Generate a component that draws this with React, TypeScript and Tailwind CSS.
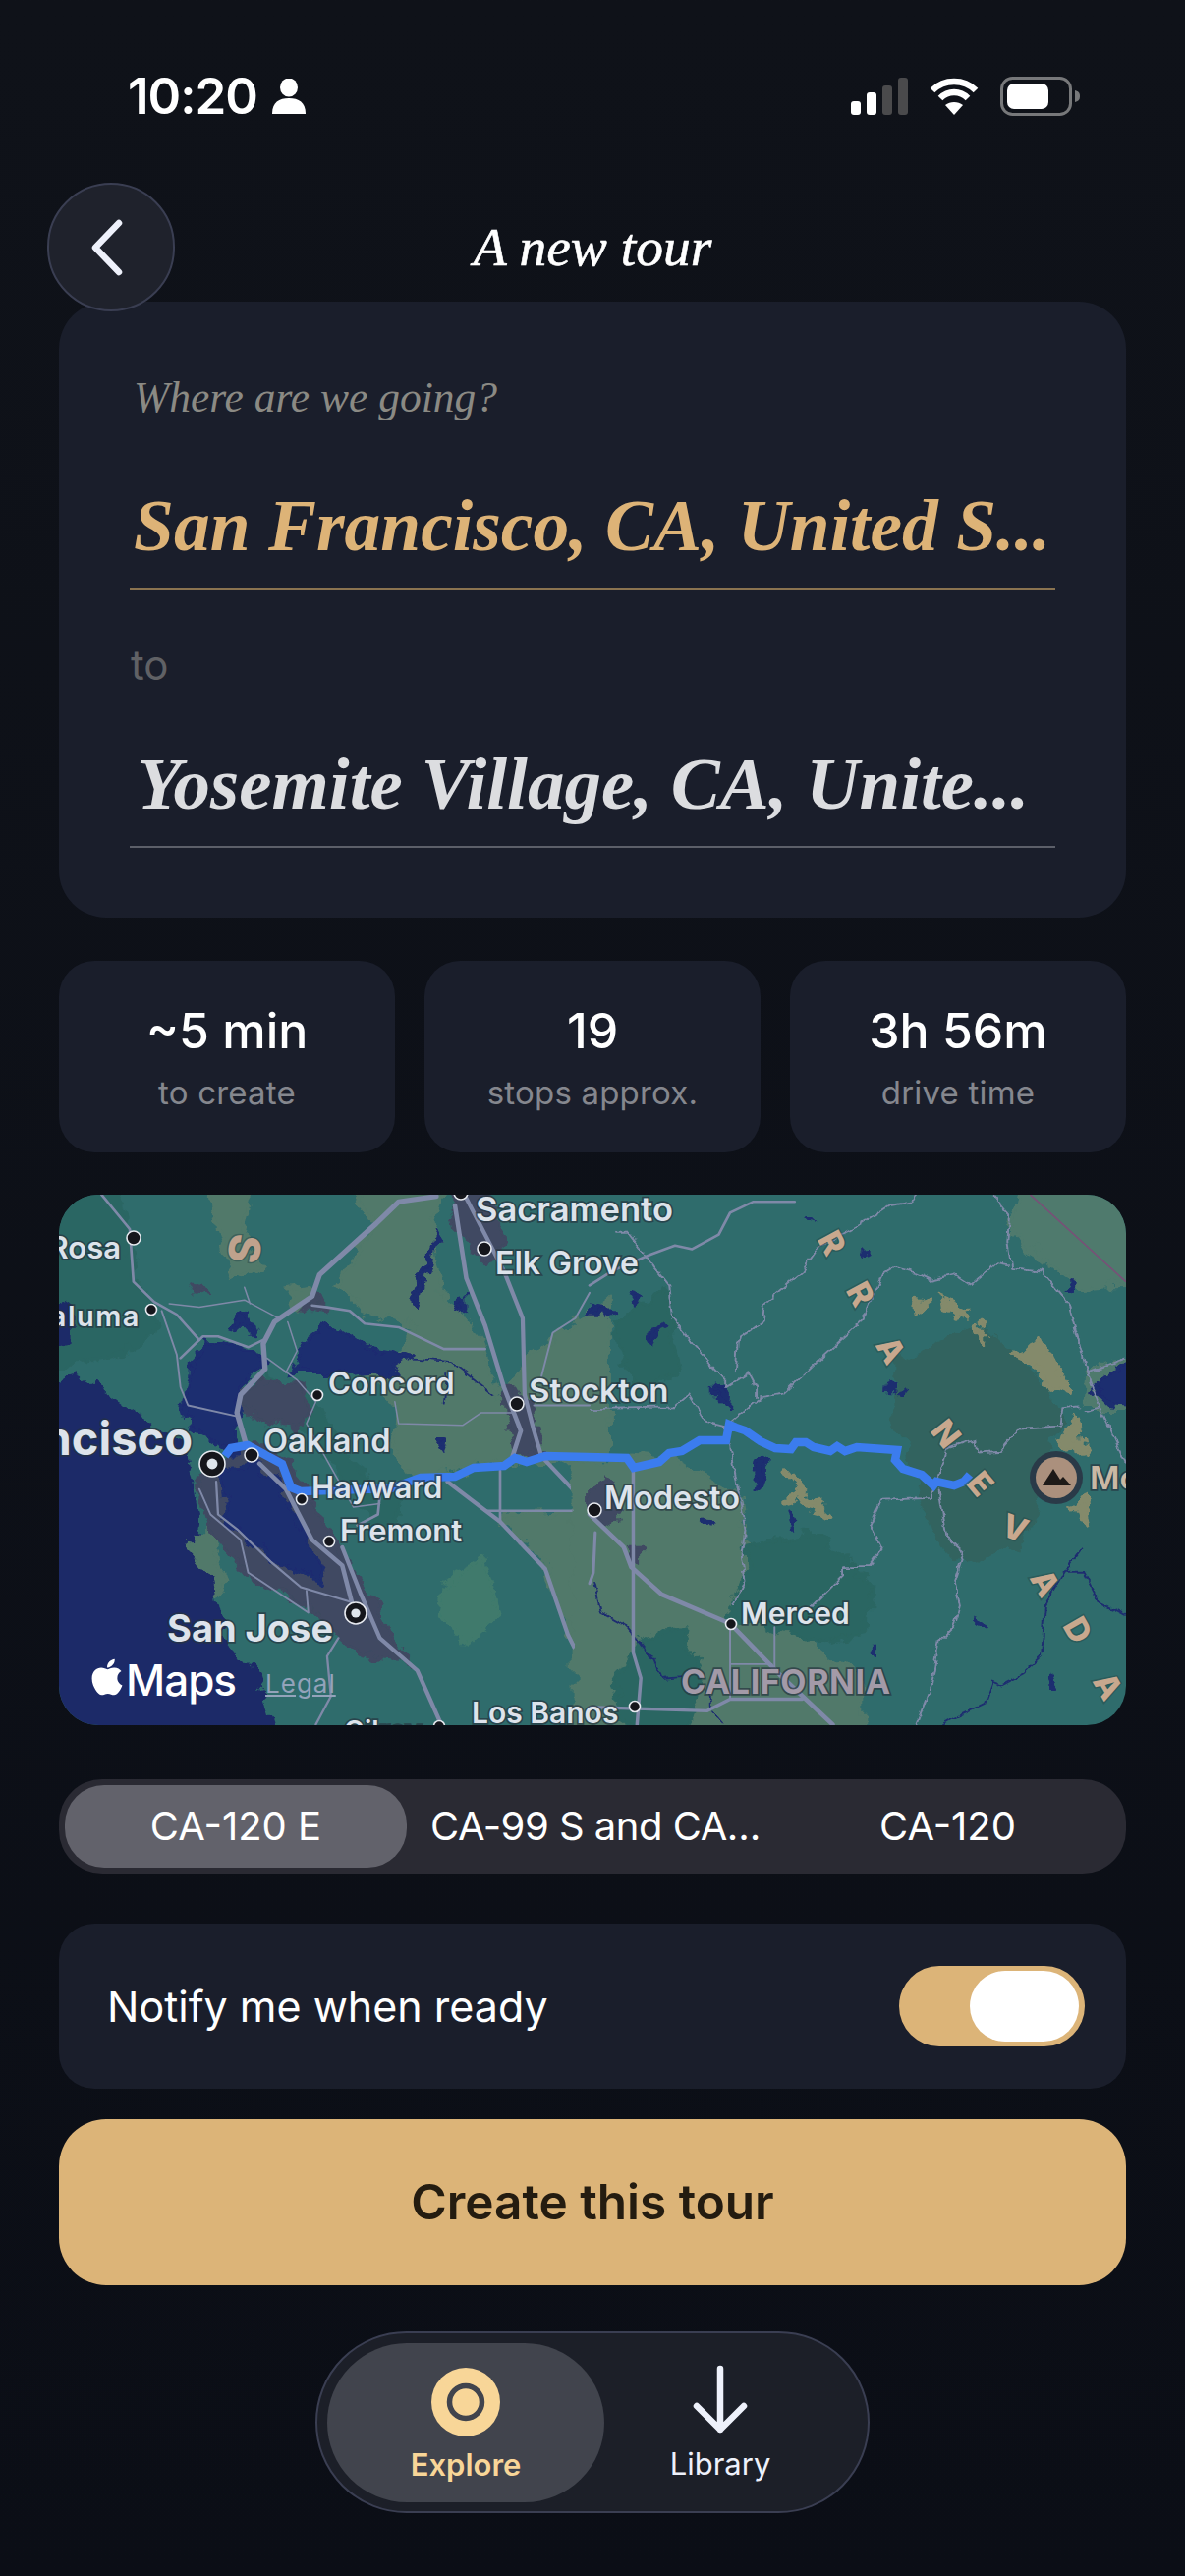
import { FaApple } from 'react-icons/fa';

const serif = "font-['Liberation_Serif',serif] italic";

function Blob({ d, fill }: { d: string; fill: string }) {
  return <path d={d} fill={fill} stroke={fill} strokeWidth={10} strokeLinejoin="round" />;
}

function Road({ d, w = 4 }: { d: string; w?: number }) {
  return <path d={d} fill="none" stroke="#7f89a8" strokeWidth={w} strokeLinejoin="round" strokeLinecap="round" />;
}

function Pin({ x, y, r = 7 }: { x: number; y: number; r?: number }) {
  return <circle cx={x} cy={y} r={r} fill="#15161c" stroke="#e6e9ef" strokeWidth={1.6} />;
}

function CityPin({ x, y, r }: { x: number; y: number; r: number }) {
  return (
    <g>
      <circle cx={x} cy={y} r={r} fill="#15161c" stroke="#e6e9ef" strokeWidth={1.6} />
      <circle cx={x} cy={y} r={r * 0.42} fill="#dfe5ec" />
    </g>
  );
}

function Label({ x, y, size, text, end, weight = 600, spacing = 0, color = '#dde3eb' }: { x: number; y: number; size: number; text: string; end?: boolean; weight?: number; spacing?: number; color?: string }) {
  return (
    <text
      x={x}
      y={y}
      fontSize={size}
      fontWeight={weight}
      letterSpacing={spacing}
      textAnchor={end ? 'end' : 'start'}
      fill={color}
      stroke="#26343f"
      strokeOpacity={0.7}
      strokeWidth={3.5}
      paintOrder="stroke"
      fontFamily="Inter, sans-serif"
    >
      {text}
    </text>
  );
}

const sierra: [string, number, number, number][] = [
  ['R', 847, 1277, 62],
  ['R', 876, 1329, 62],
  ['A', 907, 1386, 60],
  ['N', 963, 1471, 52],
  ['E', 998, 1522, 50],
  ['V', 1033, 1567, 20],
  ['A', 1064, 1623, 60],
  ['D', 1097, 1671, 60],
  ['A', 1128, 1728, 60],
];

function RouteMap() {
  return (
    <svg viewBox="60 1216 1086 540" className="block w-full h-full">
      <defs>
        {/* rough up the traced shapes so the coast and terrain look organic */}
        <filter id="organic" x="-10%" y="-10%" width="120%" height="120%">
          <feTurbulence type="fractalNoise" baseFrequency="0.018" numOctaves="4" seed="7" />
          <feDisplacementMap in="SourceGraphic" scale="60" xChannelSelector="R" yChannelSelector="G" />
        </filter>
        <filter id="wiggle" x="-10%" y="-10%" width="120%" height="120%">
          <feTurbulence type="fractalNoise" baseFrequency="0.03" numOctaves="3" seed="3" />
          <feDisplacementMap in="SourceGraphic" scale="22" xChannelSelector="R" yChannelSelector="G" />
        </filter>
      </defs>
      <rect x="60" y="1216" width="1086" height="540" fill="#2f6c6c" />

      {/* left half, traced from the bay area */}
      <g transform="translate(0 1190) scale(0.3827 0.37)">
        <g filter="url(#organic)">
          <Blob fill="#51796a" d="M900 20 L1180 20 L1150 200 L1170 330 L1280 470 L1340 640 L1400 520 L1620 350 L1620 800 L1320 810 L1200 830 L1100 850 L1040 760 L1060 650 L980 560 L1060 520 L1100 440 L960 390 L900 320 L1000 150 Z" />
          <Blob fill="#51796a" d="M760 330 L830 320 L810 380 L770 380 Z M510 1000 L560 1000 L600 1140 L570 1180 L510 1060 Z" />
          <Blob fill="#3f7a6c" d="M1180 1140 L1290 1060 L1330 1230 L1240 1310 L1170 1220 Z" />
          <Blob fill="#51796a" d="M1340 950 L1620 940 L1620 1420 L1510 1280 L1450 1100 Z" />
          <Blob fill="#51796a" d="M560 20 L680 20 L640 200 L700 270 L620 300 L580 170 Z" />
          <Blob fill="#2c6663" d="M100 20 L300 20 L340 170 L350 300 L420 380 L400 460 L300 520 L100 560 Z M700 560 L840 640 L1000 900 L1100 880 L1020 1000 L880 800 Z" />
          <Blob fill="#1c2a68" d="M90 610 L200 575 L290 620 L370 680 L490 770 L505 850 L520 950 L500 1050 L560 1130 L590 1280 L680 1400 L740 1600 L90 1600 Z" />
          <Blob fill="#1c2a68" d="M100 340 L190 400 L190 480 L100 500 Z" />
          <Blob fill="#3f4a62" d="M650 760 L720 760 L800 850 L900 1040 L1000 1200 L1040 1290 L1100 1370 L960 1330 L820 1210 L650 1110 L560 1000 L520 860 Z" />
          <Blob fill="#3f4a62" d="M630 630 L690 580 L780 590 L830 670 L800 720 L700 700 Z" />
          <Blob fill="#3f4a62" d="M1190 40 L1290 40 L1340 200 L1300 260 L1220 180 Z M1340 600 L1420 640 L1440 780 L1370 790 Z M520 300 L560 350 L510 340 Z M840 340 L870 390 L800 380 Z" />
          <Blob fill="#1f2d70" d="M510 530 L560 470 L660 490 L695 530 L640 610 L630 680 L640 780 L600 780 L510 720 L490 650 Z" />
          <Blob fill="#1f2d70" d="M590 830 L680 810 L750 870 L800 1000 L870 1130 L770 1100 L700 1060 L600 960 Z" />
          <Blob fill="#1f2d70" d="M780 560 L830 460 L870 430 L960 490 L1060 510 L1100 520 L1040 560 L950 570 L860 560 Z" />
          <Blob fill="#1f2d70" d="M1095 350 L1160 170 L1115 380 Z M1210 380 L1240 350 L1240 390 Z M1160 740 L1190 740 L1180 770 Z M610 440 L660 400 L680 450 Z" />
        </g>
        <path d="M1090 520 L1200 530 L1310 620 M1190 560 L1180 650" fill="none" stroke="#1f2d70" strokeWidth={5} filter="url(#wiggle)" />

        <Road w={7} d="M270 70 L345 165 L355 310 L410 365 L470 400 L530 470" />
        <Road w={14} d="M1160 75 L1060 90 L1000 150 L850 290 L830 350 L730 420 L700 480 L705 550 L640 620 L630 670 L655 760" />
        <Road w={7} d="M830 375 L870 380 L930 390 L970 425 L1060 435 L1180 495 L1290 495" />
        <Road w={12} d="M1210 100 L1240 300 L1290 430 L1340 600 L1385 720 L1360 800" />
        <Road w={11} d="M1240 80 L1340 280 L1390 410 L1395 620 L1420 720 L1440 790 L1568 930" />
        <Road w={12} d="M690 810 L760 880 L830 1020 L910 1090 L935 1190" />
        <Road w={11} d="M910 1040 L960 1170 L1010 1290 L1110 1380 L1170 1520" />
        <Road w={11} d="M1190 860 L1330 970 L1450 1100 L1510 1280 L1568 1400" />
        <Road w={7} d="M1330 830 L1330 970 M1290 940 L1568 940" />
        <Road w={6} d="M900 1290 L870 1340 L880 1450 L840 1528" />
        <Road w={5} d="M530 880 L560 950 L640 1020 L660 1110 L820 1220 L815 1160" />
        <Road w={6} d="M575 860 L580 950 L630 990 L720 1080 L800 1150 L930 1190" />
        <Road w={7} d="M480 520 L540 460 L580 460 L660 490 L700 470" />
        <Road w={5} d="M430 390 L470 510 L480 600 L500 650 L630 680" />
        <Road w={4} d="M450 370 L530 380 L650 360 L740 410 M650 325 L665 370 M765 420 L790 500 L760 560" />
        <Road w={4} d="M710 520 L790 580 L840 640 L815 700 L880 820 L940 930 L1010 920" />
        <Road w={4} d="M1050 640 L1060 700 L1230 705 L1280 670 L1370 670" />
        <Road w={5} d="M1440 570 L1470 450 L1530 410 L1568 340 M1568 650 L1420 650" />
        <Road w={7} d="M1010 900 L1005 950 L950 980" />
      </g>

      {/* right half, valley and sierra */}
      <g transform="translate(600 1190) scale(0.3866 0.37)">
        <g filter="url(#organic)">
          <Blob fill="#51796a" d="M-40 800 L110 790 L230 800 L400 900 L420 1100 L370 1220 L580 1300 L720 1420 L720 1600 L-40 1600 Z" />
          <Blob fill="#2b6662" d="M400 1050 L590 1000 L740 1130 L730 1270 L580 1300 L370 1220 L420 1100 Z M120 1600 L60 1420 L130 1300 L240 1260 L300 1400 L240 1600 Z M60 420 L200 340 L240 560 L120 620 Z" />
          <Blob fill="#31645f" d="M800 530 L1000 440 L1070 460 L1200 600 L1240 690 L1200 800 L1180 950 L1130 1030 L1020 1075 L950 1070 L880 920 L840 760 L800 680 Z" />
          <Blob fill="#4f7a6d" d="M1140 20 L1480 20 L1480 320 L1300 330 L1200 250 L1110 180 Z M1310 660 L1480 660 L1480 520 L1320 550 Z" />
          <g opacity={0.9}>
            <Blob fill="#8d8d6c" d="M1110 510 L1190 470 L1220 530 L1265 590 L1265 625 L1210 600 L1170 540 Z M920 350 L995 385 L985 405 L925 380 Z M1015 425 L1045 460 L1030 475 Z M1265 675 L1280 685 L1305 795 L1245 745 Z M1270 920 L1310 910 L1320 970 L1300 965 Z M510 825 L575 900 L640 960 L590 945 Z M510 908 L555 895 L540 920 Z M855 372 L885 378 L860 400 Z" />
          </g>
          <Blob fill="#3f4a62" d="M0 880 L50 850 L85 955 L40 985 L0 960 Z M105 1045 L135 1045 L135 1085 L115 1085 Z" />
          <Blob fill="#1f2d70" d="M325 585 L370 625 L368 655 L325 610 Z M435 800 L470 815 L450 875 L425 875 Z M0 380 L60 392 L40 400 L0 400 Z M150 455 L195 425 L165 485 Z M110 340 L135 348 L130 375 Z M1325 600 L1380 555 L1480 545 L1480 655 L1370 648 Z M1248 340 L1275 305 L1268 345 Z M783 595 L792 620 L780 620 Z M808 622 L832 612 L825 625 Z M575 135 L600 135 L598 137 Z M722 225 L742 224 L722 230 Z M300 958 L330 975 L322 985 Z M1022 1232 L1042 1248 L1022 1243 Z M733 1310 L742 1310 L735 1330 Z M1208 1422 L1220 1395 L1228 1422 Z M518 935 L536 978 L527 982 Z" />
        </g>
        <path d="M1295 1045 L1250 1110 L1200 1200 L1190 1340 L1140 1390 L1085 1420 L1060 1410 L1040 1470 L960 1510 L930 1528 M1250 1110 L1300 1110 L1340 1190 L1412 1230 M10 1130 L30 1220 L100 1260 L170 1350 L190 1400 L240 1395 M320 1440 L320 1490 L350 1528" fill="none" stroke="#1f2d70" strokeWidth={5} filter="url(#wiggle)" />
        <path d="M1160 70 L1412 310" fill="none" stroke="#7a4f78" strokeWidth={4} />

        <Road w={7} d="M540 90 L430 90 L370 120 L340 180 L270 220 L225 210 L160 235 L60 280 L0 320" />
        <g filter="url(#wiggle)">
          <Road w={5} d="M860 70 L850 90 L790 100 L700 160 L600 220 L560 280 L460 370 L455 420 L390 470 L385 560" />
          <Road w={5} d="M1065 70 L1105 120 L1100 200 L1110 270 L1190 280 L1260 370 L1290 480 L1310 560 L1350 670 L1412 810" />
          <Road w={5} d="M1100 265 L1070 260 L1005 320 L960 290 L900 305 L860 285 L800 270 L770 290 L715 420 L620 510 L510 620 L450 630 L370 700" />
          <Road w={5} d="M70 175 L100 175 L210 320 L220 410 L270 480 L360 580 L360 600 L420 560 L440 600 L440 630" />
          <Road w={5} d="M0 660 L220 655 L260 620 L305 695 L360 710" />
          <Road w={5} d="M370 760 L410 990 L400 1060 L410 1130 L380 1200" />
          <Road w={5} d="M770 910 L900 905 L940 770 L1015 745 L1020 780 L1080 775 L1130 715 L1240 710 L1245 660 L1290 655" />
          <Road w={5} d="M920 885 L940 1010 L985 1050 L960 1130 L975 1200 L960 1260 L920 1300 L900 1420 L860 1528" />
          <Road w={5} d="M770 910 L740 980 L770 1045 L735 1095 L665 1095 L665 1120 L580 1210" />
          <Road w={5} d="M1310 560 L1412 520 M1305 665 L1345 655" />
        </g>
        <Road w={12} d="M0 950 L90 1040 L110 1095 L190 1170 L370 1250 L500 1390 L640 1528" />
        <Road w={9} d="M115 830 L115 1330 L135 1400 L125 1528" />
        <Road w={9} d="M0 1480 L310 1490 L370 1458 L560 1458" />
        <Road w={5} d="M370 1250 L370 1458 M370 1362 L480 1362 M487 1260 L487 1370" />
        <Road w={8} d="M15 1000 L10 1110 L0 1140" />
      </g>

      <path
        d="M229 1482 L235 1474 L252 1471 L287 1490 L296 1514 L306 1518 L398 1515 L428 1504 L463 1503 L482 1494 L513 1492 L524 1484 L536 1488 L555 1482 L638 1484 L645 1494 L671 1488 L681 1479 L694 1477 L712 1466 L739 1466 L742 1450 L749 1453 L758 1456 L774 1467 L789 1474 L805 1475 L810 1468 L820 1468 L828 1473 L845 1477 L852 1472 L860 1477 L872 1473 L913 1476 L911 1486 L919 1495 L938 1501 L950 1512 L953 1508 L971 1512 L981 1508 L987 1501"
        fill="none"
        stroke="#3b7cee"
        strokeWidth={8.5}
        strokeLinejoin="miter"
      />

      <text x="249" y="1287" fontSize="44" fontWeight={800} fontFamily="Inter, sans-serif" fill="#bfa28d" stroke="#2a4a4a" strokeOpacity={0.5} strokeWidth={3} paintOrder="stroke" textAnchor="middle" transform="rotate(100 249 1271)">S</text>
      {sierra.map(([c, x, y, rot], i) => (
        <text key={i} x={x} y={y} fontSize="33" fontWeight={800} fontFamily="Inter, sans-serif" fill="#c8a88e" stroke="#274c4c" strokeOpacity={0.55} strokeWidth={3} paintOrder="stroke" textAnchor="middle" transform={`rotate(${rot} ${x} ${y - 12})`}>
          {c}
        </text>
      ))}

      <Pin x={136} y={1260} />
      <Pin x={154} y={1333} r={5.5} />
      <Pin x={323} y={1420} r={5.5} />
      <Pin x={526} y={1429} />
      <Pin x={256} y={1481} />
      <Pin x={307} y={1526} r={5.5} />
      <Pin x={335} y={1569} r={5.5} />
      <Pin x={493} y={1271} />
      <Pin x={469} y={1214} />
      <Pin x={605} y={1537} />
      <Pin x={744} y={1653} r={5.5} />
      <Pin x={646} y={1737} r={5.5} />
      <Pin x={447} y={1757} r={5.5} />
      <CityPin x={216} y={1490} r={13} />
      <CityPin x={362} y={1642} r={11} />

      <Label x={123} y={1281} size={31} text="Santa Rosa" end />
      <Label x={143} y={1350} size={29} text="Petaluma" end spacing={1.5} />
      <Label x={196} y={1481} size={47} text="San Francisco" end weight={700} />
      <Label x={334} y={1419} size={31} text="Concord" />
      <Label x={268} y={1478} size={32.5} text="Oakland" />
      <Label x={317} y={1525} size={31} text="Hayward" />
      <Label x={346} y={1569} size={31} text="Fremont" />
      <Label x={170} y={1671} size={38} text="San Jose" weight={700} />
      <Label x={484} y={1243} size={34.5} text="Sacramento" />
      <Label x={504} y={1297} size={32} text="Elk Grove" />
      <Label x={538} y={1427} size={33} text="Stockton" />
      <Label x={615} y={1536} size={32.5} text="Modesto" />
      <Label x={754} y={1653} size={30} text="Merced" />
      <Label x={480} y={1754} size={30} text="Los Banos" />
      <Label x={350} y={1772} size={28} text="Gilroy" />
      <Label x={693} y={1724} size={34} text="CALIFORNIA" weight={700} spacing={0.6} color="#a39aa8" />

      <circle cx={1075} cy={1504} r={27} fill="#2a3a48" />
      <circle cx={1075} cy={1504} r={21} fill="#ab907d" />
      <path d="M1061 1512 L1072 1495 L1079 1506 L1082 1503 L1090 1512 Z" fill="#1e1a18" />
      <Label x={1109} y={1516} size={33} text="Mono Lake" color="#c9b8a4" />
    </svg>
  );
}

function Stat({ value, label }: { value: string; label: string }) {
  return (
    <div className="flex flex-col items-center justify-center h-[195px] rounded-[36px] bg-[#1a1e2b]">
      <div className="text-[50px] leading-[60px] font-medium text-white">{value}</div>
      <div className="mt-3 text-[33px] leading-[42px] tracking-[0.2px] text-[#85878e]">{label}</div>
    </div>
  );
}

export default function App() {
  return (
    <div className="w-[1206px] h-[2622px] overflow-hidden bg-linear-to-b from-[#0f1219] to-[#0b0e16] px-[60px] font-['Inter',sans-serif]">
      {/* status bar */}
      <div className="flex items-center justify-between h-[60px] pt-[68px] box-content">
        <div className="flex items-center gap-[14px] pl-[70px] text-white">
          <span className="text-[51px] leading-[60px] font-semibold tracking-[-1px]">10:20</span>
          <svg width="36" height="36" viewBox="0 0 34 36" fill="white">
            <ellipse cx="17" cy="9" rx="9" ry="9.5" />
            <path d="M0 36 C0 24 7 20 17 20 C27 20 34 24 34 36 Z" />
          </svg>
        </div>
        <div className="flex items-center gap-[22px] pr-[46px]">
          <svg width="58" height="38" viewBox="0 0 58 38">
            <rect x="0" y="24" width="10" height="14" rx="3" fill="white" />
            <rect x="16" y="15" width="10" height="23" rx="3" fill="white" />
            <rect x="32" y="8" width="10" height="30" rx="3" fill="#4a4a4c" />
            <rect x="48" y="0" width="10" height="38" rx="3" fill="#4a4a4c" />
          </svg>
          <svg width="50" height="38" viewBox="0 0 50 38" fill="none" stroke="white" strokeWidth="6.5">
            <path d="M3 13 C15 1 35 1 47 13" />
            <path d="M11 21 C19 13 31 13 39 21" />
            <path d="M25 38 L16 28 C21 24 29 24 34 28 Z" fill="white" stroke="none" />
          </svg>
          <svg width="82" height="40" viewBox="0 0 82 40">
            <rect x="1.5" y="1.5" width="70" height="37" rx="11" fill="none" stroke="#77787a" strokeWidth="3" />
            <rect x="7" y="7" width="42" height="26" rx="7" fill="white" />
            <path d="M76 14 C80 15 81 17 81 20 C81 23 80 25 76 26 Z" fill="#77787a" />
          </svg>
        </div>
      </div>

      {/* header */}
      <div className="flex items-center -mx-[12px] mt-[58px] -mb-[10px] relative">
        <button className="flex items-center justify-center w-[130px] h-[131px] shrink-0 rounded-full border-2 border-[#3a3e52] bg-[#1f222c] relative z-10">
          <svg width="40" height="60" viewBox="0 0 40 60" fill="none" stroke="#eef1fb" strokeWidth="6.5" strokeLinecap="round" strokeLinejoin="round" className="mr-[8px]">
            <path d="M32 5 L8 30 L32 55" />
          </svg>
        </button>
        <h1 className={`flex-1 mr-[130px] text-center text-[55.5px] leading-[60px] font-normal [-webkit-text-stroke:0.6px_white] text-white ${serif}`}>A new tour</h1>
      </div>

      {/* where to */}
      <div className="h-[627px] rounded-[48px] bg-[#1a1e2b] px-[76px] pt-[71px]">
        <div className={`text-[43.5px] leading-[52px] text-[#8b8a84] ${serif}`}>Where are we going?</div>
        <div className={`mt-[61px] -mx-[4px] px-[4px] h-[110px] border-b-2 border-[#8a7350] text-[73.5px] leading-[90px] font-bold text-[#ddb377] whitespace-nowrap ${serif}`}>San Francisco, CA, United S...</div>
        <div className="mt-[51px] -ml-[3px] text-[42px] leading-[50px] text-[#606165]">to</div>
        <div className={`mt-[51px] -mx-[4px] pl-[7px] h-[110px] border-b-2 border-[#5c5f69] text-[75px] leading-[90px] font-bold text-[#dcdde0] whitespace-nowrap ${serif}`}>Yosemite Village, CA, Unite...</div>
      </div>

      {/* stats */}
      <div className="grid grid-cols-3 gap-[30px] mt-[44px]">
        <Stat value="~5 min" label="to create" />
        <Stat value="19" label="stops approx." />
        <Stat value="3h 56m" label="drive time" />
      </div>

      {/* map */}
      <div className="relative h-[540px] mt-[43px] rounded-[40px] overflow-hidden">
        <RouteMap />
        <div className="absolute left-[30px] bottom-[18px] flex items-end text-white">
          <FaApple className="w-[38px] h-[42px] mb-[10px]" />
          <span className="text-[44px] leading-[56px] font-medium tracking-[-1px]">Maps</span>
          <span className="ml-[30px] mb-[8px] text-[26px] leading-[32px] tracking-[1px] underline text-[#93a3ba]">Legal</span>
        </div>
      </div>

      {/* route choice */}
      <div className="grid grid-cols-[348px_1fr_1fr] items-center h-[96px] mt-[55px] p-[6px] rounded-[44px] bg-[#2a2a33] text-[40px] text-white">
        <div className="flex items-center justify-center h-[84px] rounded-[40px] bg-[#62626b]">CA-120 E</div>
        <div className="pl-[24px] whitespace-nowrap tracking-[-0.5px]">CA-99 S and CA…</div>
        <div className="text-center pl-[12px]">CA-120</div>
      </div>

      {/* notify */}
      <div className="flex items-center justify-between h-[168px] mt-[51px] rounded-[36px] bg-[#1a1e2b] pl-[49px] pr-[42px]">
        <span className="text-[43px] text-white">Notify me when ready</span>
        <div className="flex items-center justify-end w-[189px] h-[82px] pr-[6px] rounded-full bg-[#dcb478]">
          <div className="w-[111px] h-[72px] rounded-full bg-white" />
        </div>
      </div>

      {/* create */}
      <button className="block w-full h-[169px] mt-[31px] rounded-[48px] bg-[#dcb478] text-[49.5px] font-semibold text-[#241c10]">Create this tour</button>

      {/* tab bar */}
      <div className="flex items-center w-[564px] h-[185px] mx-auto mt-[47px] pl-[10px] rounded-full border-2 border-[#3a3e52] bg-[#1c1f28]">
        <div className="flex flex-col items-center w-[282px] h-[162px] pt-[25px] rounded-full bg-[#41444d]">
          <svg width="70" height="70" viewBox="0 0 70 70">
            <circle cx="35" cy="35" r="35" fill="#f8d698" />
            <circle cx="35" cy="35" r="16.5" fill="none" stroke="#41444d" strokeWidth="5.5" />
          </svg>
          <span className="mt-[9px] text-[31px] leading-[40px] font-semibold text-[#f8d698]">Explore</span>
        </div>
        <div className="flex flex-col items-center flex-1 pr-[32px] pt-[3px]">
          <svg width="56" height="70" viewBox="0 0 56 70" fill="none" stroke="#eef1fb" strokeWidth="6.5" strokeLinecap="round" strokeLinejoin="round">
            <path d="M28 4 L28 66 M4 42 L28 66 L52 42" />
          </svg>
          <span className="mt-[11px] text-[31px] leading-[40px] font-normal text-[#eef1fb]">Library</span>
        </div>
      </div>
    </div>
  );
}
